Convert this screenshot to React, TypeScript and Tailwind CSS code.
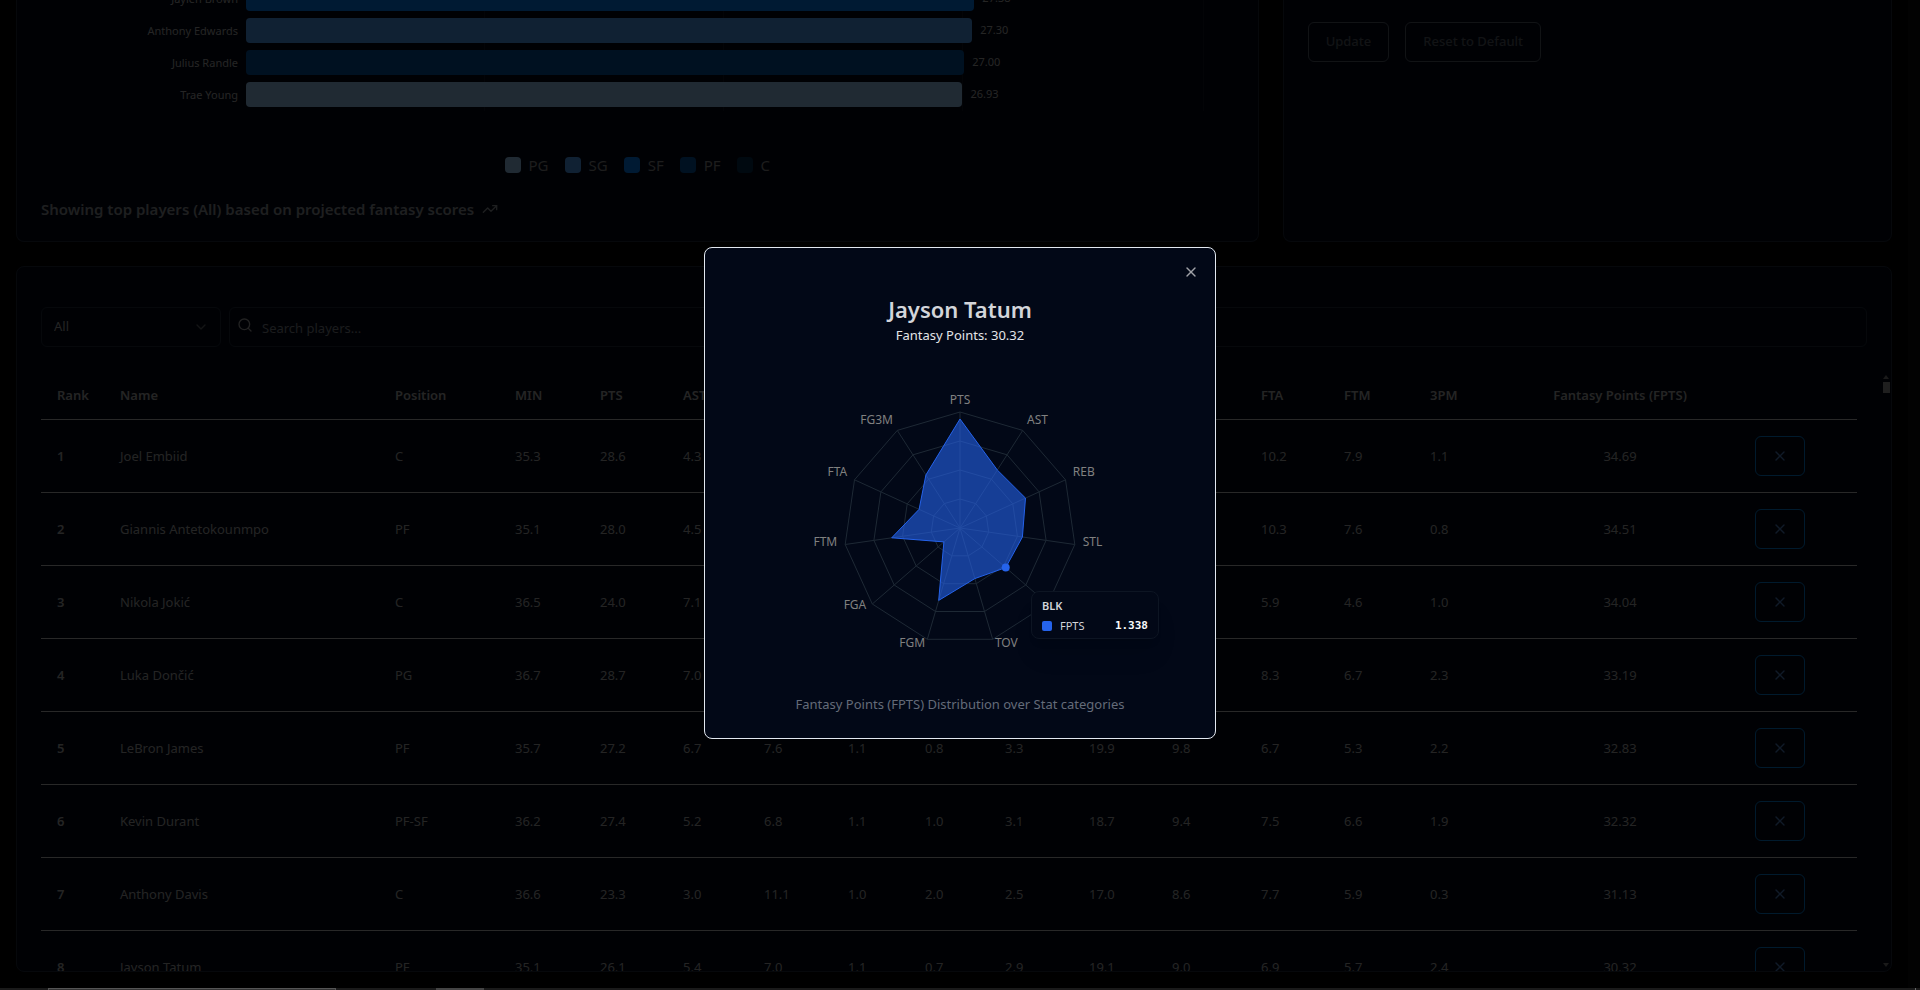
import { ChevronDown, Search, TrendingUp, X } from 'lucide-react';

type Position = 'PG' | 'SG' | 'SF' | 'PF' | 'C';

const positionColors: Record<Position, string> = {
  PG: 'bg-[#a0d2ff]',
  SG: 'bg-[#50a5ff]',
  SF: 'bg-[#0082ff]',
  PF: 'bg-[#0055a5]',
  C: 'bg-[#002d50]',
};

const positions: Position[] = ['PG', 'SG', 'SF', 'PF', 'C'];

const CHART_MAX = 36;

const topPlayers: { name: string; position: Position; fpts: number }[] = [
  { name: 'Jaylen Brown', position: 'SF', fpts: 27.38 },
  { name: 'Anthony Edwards', position: 'SG', fpts: 27.3 },
  { name: 'Julius Randle', position: 'PF', fpts: 27.0 },
  { name: 'Trae Young', position: 'PG', fpts: 26.93 },
];

const columns = [
  { label: 'Rank', width: 'w-[63px]' },
  { label: 'Name', width: 'w-[275px]' },
  { label: 'Position', width: 'w-[120px]' },
  { label: 'MIN', width: 'w-[85px]' },
  { label: 'PTS', width: 'w-[83px]' },
  { label: 'AST', width: 'w-[81px]' },
  { label: 'REB', width: 'w-[84px]' },
  { label: 'STL', width: 'w-[77px]' },
  { label: 'BLK', width: 'w-[80px]' },
  { label: 'TOV', width: 'w-[84px]' },
  { label: 'FGA', width: 'w-[83px]' },
  { label: 'FGM', width: 'w-[89px]' },
  { label: 'FTA', width: 'w-[83px]' },
  { label: 'FTM', width: 'w-[86px]' },
  { label: '3PM', width: 'w-[87px]' },
];

const players = [
  { name: 'Joel Embiid', position: 'C', stats: ['35.3', '28.6', '4.3', '11.0', '1.1', '1.6', '3.3', '19.5', '9.9', '10.2', '7.9', '1.1'], fpts: '34.69' },
  { name: 'Giannis Antetokounmpo', position: 'PF', stats: ['35.1', '28.0', '4.5', '11.2', '0.9', '1.1', '3.4', '19.2', '9.8', '10.3', '7.6', '0.8'], fpts: '34.51' },
  { name: 'Nikola Jokić', position: 'C', stats: ['36.5', '24.0', '7.1', '11.5', '1.2', '0.8', '3.3', '16.8', '9.2', '5.9', '4.6', '1.0'], fpts: '34.04' },
  { name: 'Luka Dončić', position: 'PG', stats: ['36.7', '28.7', '7.0', '8.6', '1.2', '0.5', '4.0', '21.1', '9.8', '8.3', '6.7', '2.3'], fpts: '33.19' },
  { name: 'LeBron James', position: 'PF', stats: ['35.7', '27.2', '6.7', '7.6', '1.1', '0.8', '3.3', '19.9', '9.8', '6.7', '5.3', '2.2'], fpts: '32.83' },
  { name: 'Kevin Durant', position: 'PF-SF', stats: ['36.2', '27.4', '5.2', '6.8', '1.1', '1.0', '3.1', '18.7', '9.4', '7.5', '6.6', '1.9'], fpts: '32.32' },
  { name: 'Anthony Davis', position: 'C', stats: ['36.6', '23.3', '3.0', '11.1', '1.0', '2.0', '2.5', '17.0', '8.6', '7.7', '5.9', '0.3'], fpts: '31.13' },
  { name: 'Jayson Tatum', position: 'PF', stats: ['35.1', '26.1', '5.4', '7.0', '1.1', '0.7', '2.9', '19.1', '9.0', '6.9', '5.7', '2.4'], fpts: '30.32' },
];

const radarData = [
  { stat: 'PTS', r: 109 },
  { stat: 'AST', r: 69 },
  { stat: 'REB', r: 72 },
  { stat: 'STL', r: 63 },
  { stat: 'BLK', r: 60.5 },
  { stat: 'TOV', r: 52.7 },
  { stat: 'FGM', r: 75.5 },
  { stat: 'FGA', r: 21.3 },
  { stat: 'FTM', r: 69 },
  { stat: 'FTA', r: 45 },
  { stat: 'FG3M', r: 63 },
];

const CX = 231;
const CY = 145;
const OUTER = 116;

function point(index: number, radius: number) {
  const angle = (index * 2 * Math.PI) / radarData.length;
  return { x: CX + radius * Math.sin(angle), y: CY - radius * Math.cos(angle) };
}

function polygon(radii: number[]) {
  return radii
    .map((r, i) => {
      const p = point(i, r);
      return `${p.x.toFixed(1)},${p.y.toFixed(1)}`;
    })
    .join(' ');
}

function anchorFor(x: number) {
  if (Math.abs(x - CX) < 1) return 'middle';
  return x > CX ? 'start' : 'end';
}

function RadarChart() {
  const active = point(4, radarData[4].r);

  return (
    <svg viewBox="0 0 462 290" className="w-full h-[290px]" role="img" aria-label="Fantasy points by stat">
      <g fill="none" stroke="#1e2935">
        {radarData.map((d, i) => {
          const p = point(i, OUTER);
          return <line key={d.stat} x1={CX} y1={CY} x2={p.x} y2={p.y} />;
        })}
        {[29, 58, 87, 116].map((r) => (
          <polygon key={r} points={polygon(radarData.map(() => r))} />
        ))}
      </g>
      <polygon points={polygon(radarData.map((d) => d.r))} fill="#2563eb" fillOpacity={0.6} stroke="#2563eb" />
      <circle cx={active.x} cy={active.y} r={4} fill="#2563eb" />
      {radarData.map((d, i) => {
        const p = point(i, OUTER + 8);
        return (
          <text key={d.stat} x={p.x} y={p.y} textAnchor={anchorFor(p.x)} className="fill-[#808080] text-xs">
            {d.stat}
          </text>
        );
      })}
    </svg>
  );
}

function PlayerDialog() {
  return (
    <div className="absolute inset-0 z-10 flex items-center justify-center bg-black/80 pb-0.5">
      <div
        role="dialog"
        aria-labelledby="player-name"
        className="relative w-full max-w-lg rounded-lg border border-[#e2e8f0] bg-[#020817] px-6 pt-[49px] pb-6 text-center"
      >
        <button type="button" aria-label="Close" className="absolute right-4 top-4 text-[#a0a2a8]">
          <X className="w-4 h-4" />
        </button>

        <h2 id="player-name" className="text-[22px] leading-6 font-semibold text-[#d3d5da]">
          Jayson Tatum
        </h2>
        <p className="mt-1 text-[13px] leading-5 text-[#e2e4e8]">Fantasy Points: 30.32</p>

        <div className="relative mt-[38px]">
          <RadarChart />
          {/* Tooltip */}
          <div className="absolute left-[302px] top-[208px] w-32 rounded-lg border border-[#0d1523] bg-[#020817] px-2.5 pt-1.5 pb-1 text-left text-[11px] text-[#d3d5da] shadow-xl">
            <div className="leading-4 font-semibold">BLK</div>
            <div className="mt-1 flex items-center gap-2 leading-4">
              <span className="w-2.5 h-2.5 rounded-xs bg-[#2563eb]" />
              <span>FPTS</span>
              <span className="ml-auto font-['DejaVu_Sans_Mono',monospace] font-bold text-[#f8fafc]">1.338</span>
            </div>
          </div>
        </div>

        <p className="mt-[21px] text-[13px] leading-5 text-[#646b79]">
          Fantasy Points (FPTS) Distribution over Stat categories
        </p>
      </div>
    </div>
  );
}

function ProjectionCard() {
  return (
    <section className="col-span-2 h-[242px] overflow-hidden flex flex-col justify-end rounded-b-lg border border-t-0 border-[#1e293b] bg-[#020817] px-6 pb-5">
      <div className="flex pr-[30px]">
        <ul className="w-[205px] shrink-0 flex flex-col gap-[7px] pr-2 pb-1 text-right text-[11px] text-[#b8b8b8]">
          {topPlayers.map((player) => (
            <li key={player.name} className="leading-[25px]">
              {player.name}
            </li>
          ))}
        </ul>
        <div className="relative flex-1">
          {/* Grid lines */}
          <div className="absolute inset-0 grid grid-cols-4 divide-x divide-[#0f1723] border-r border-[#0f1723]">
            <span />
            <span />
            <span />
            <span />
          </div>
          <div className="relative flex flex-col gap-[7px] text-[11px] text-[#b8b8b8]">
            {topPlayers.map((player) => (
              <div key={player.name} className="flex items-center gap-2">
                <div
                  className={`h-[25px] shrink-0 rounded ${positionColors[player.position]}`}
                  style={{ width: `${(player.fpts / CHART_MAX) * 100}%` }}
                />
                <span>{player.fpts.toFixed(2)}</span>
              </div>
            ))}
          </div>
        </div>
      </div>

      <ul className="mt-[42px] flex justify-center gap-4 text-[15px] leading-6 text-[#8f8f8f]">
        {positions.map((position) => (
          <li key={position} className="flex items-center gap-2">
            <span className={`w-4 h-4 rounded ${positionColors[position]}`} />
            {position}
          </li>
        ))}
      </ul>

      <p className="mt-5 flex items-center gap-2 text-[15px] leading-6 font-semibold text-[#94999f]">
        Showing top players (All) based on projected fantasy scores
        <TrendingUp className="w-4 h-4" />
      </p>
    </section>
  );
}

function SettingsCard() {
  return (
    <section className="flex items-start gap-4 rounded-b-lg border border-t-0 border-[#1e293b] bg-[#020817] px-6 pt-[22px]">
      {['Update', 'Reset to Default'].map((label) => (
        <button
          key={label}
          type="button"
          className="h-10 px-[17px] rounded-md border border-[#565f6c] text-[13px] font-medium text-[#596069]"
        >
          {label}
        </button>
      ))}
    </section>
  );
}

function PlayersTable() {
  return (
    <table className="w-full table-fixed text-left text-[13px] leading-5 text-[#b4b4b4]">
      <thead>
        <tr className="h-12 border-b border-[#c8c8c8]">
          {columns.map((column) => (
            <th key={column.label} className={`${column.width} pl-4 font-semibold`}>
              {column.label}
            </th>
          ))}
          <th className="w-[238px] text-center font-semibold">Fantasy Points (FPTS)</th>
          <th className="w-[118px]" aria-label="Actions" />
        </tr>
      </thead>
      <tbody>
        {players.map((player, index) => (
          <tr key={player.name} className="h-[73px] border-b border-[#c8c8c8]">
            <td className="pl-4 font-semibold">{index + 1}</td>
            <td className="pl-4">{player.name}</td>
            <td className="pl-4">{player.position}</td>
            {player.stats.map((value, i) => (
              <td key={i} className="pl-4">
                {value}
              </td>
            ))}
            <td className="text-center">{player.fpts}</td>
            <td className="pl-4">
              <button
                type="button"
                aria-label={`Remove ${player.name}`}
                className="flex h-10 items-center rounded-md border border-[#0082e0] px-4 text-[#5082c8]"
              >
                <X className="w-4 h-4" />
              </button>
            </td>
          </tr>
        ))}
      </tbody>
    </table>
  );
}

function PlayersCard() {
  return (
    <section className="mt-6 overflow-hidden rounded-lg border border-[#1e293b] bg-[#020817] pl-6 pt-10">
      <div className="flex gap-2 pr-6">
        <div className="relative w-[180px]">
          <select
            aria-label="Position"
            className="h-10 w-full appearance-none rounded-md border border-[#1e293b] bg-transparent px-3 text-[13px] text-[#b4b4b4]"
          >
            <option>All</option>
            {positions.map((position) => (
              <option key={position}>{position}</option>
            ))}
          </select>
          <ChevronDown className="pointer-events-none absolute right-3 top-3 w-4 h-4 text-[#5f6368]" />
        </div>
        <div className="relative flex-1">
          <Search className="absolute left-2 top-2.5 w-4 h-4 text-[#a8a8a8]" />
          <input
            type="text"
            aria-label="Search players"
            placeholder="Search players..."
            className="h-10 w-full rounded-md border border-[#1e293b] bg-transparent pl-8 pt-0.5 text-[13px] placeholder:text-[#858a92]"
          />
        </div>
      </div>

      <div className="mt-6 flex h-[600px] gap-6">
        <div className="flex-1 overflow-hidden">
          <PlayersTable />
        </div>
        {/* Scrollbar */}
        <div className="flex w-2.5 flex-col items-center pt-1 pb-1 text-[#808080]">
          <svg viewBox="0 0 6 4" className="w-1.5 h-1">
            <path d="M3 0 6 4H0z" fill="currentColor" />
          </svg>
          <div className="mt-[3px] h-[11px] w-[7px] bg-[#9a9a9a]" />
          <svg viewBox="0 0 6 4" className="mt-auto w-1.5 h-1">
            <path d="M0 0H6L3 4z" fill="currentColor" />
          </svg>
        </div>
      </div>
    </section>
  );
}

export default function App() {
  return (
    <div className="flex h-screen flex-col overflow-hidden bg-black font-['Noto_Sans',sans-serif]">
      <div className="relative flex min-h-0 flex-1">
        <main className="flex-1 px-4">
          <div className="grid grid-cols-3 gap-6">
            <ProjectionCard />
            <SettingsCard />
          </div>
          <PlayersCard />
        </main>
        <div className="w-3 bg-[#0c0c0c]" />
        <PlayerDialog />
      </div>

      {/* Edge of the task bar */}
      <div className="flex h-0.5 shrink-0 bg-[#1a1a1a]">
        <span className="ml-12 w-72 border border-b-0 border-[#555555] bg-[#333333]" />
        <span className="ml-[100px] w-12 bg-[#444444]" />
        <span className="ml-auto mr-1 w-px bg-[#666666]" />
      </div>
    </div>
  );
}
